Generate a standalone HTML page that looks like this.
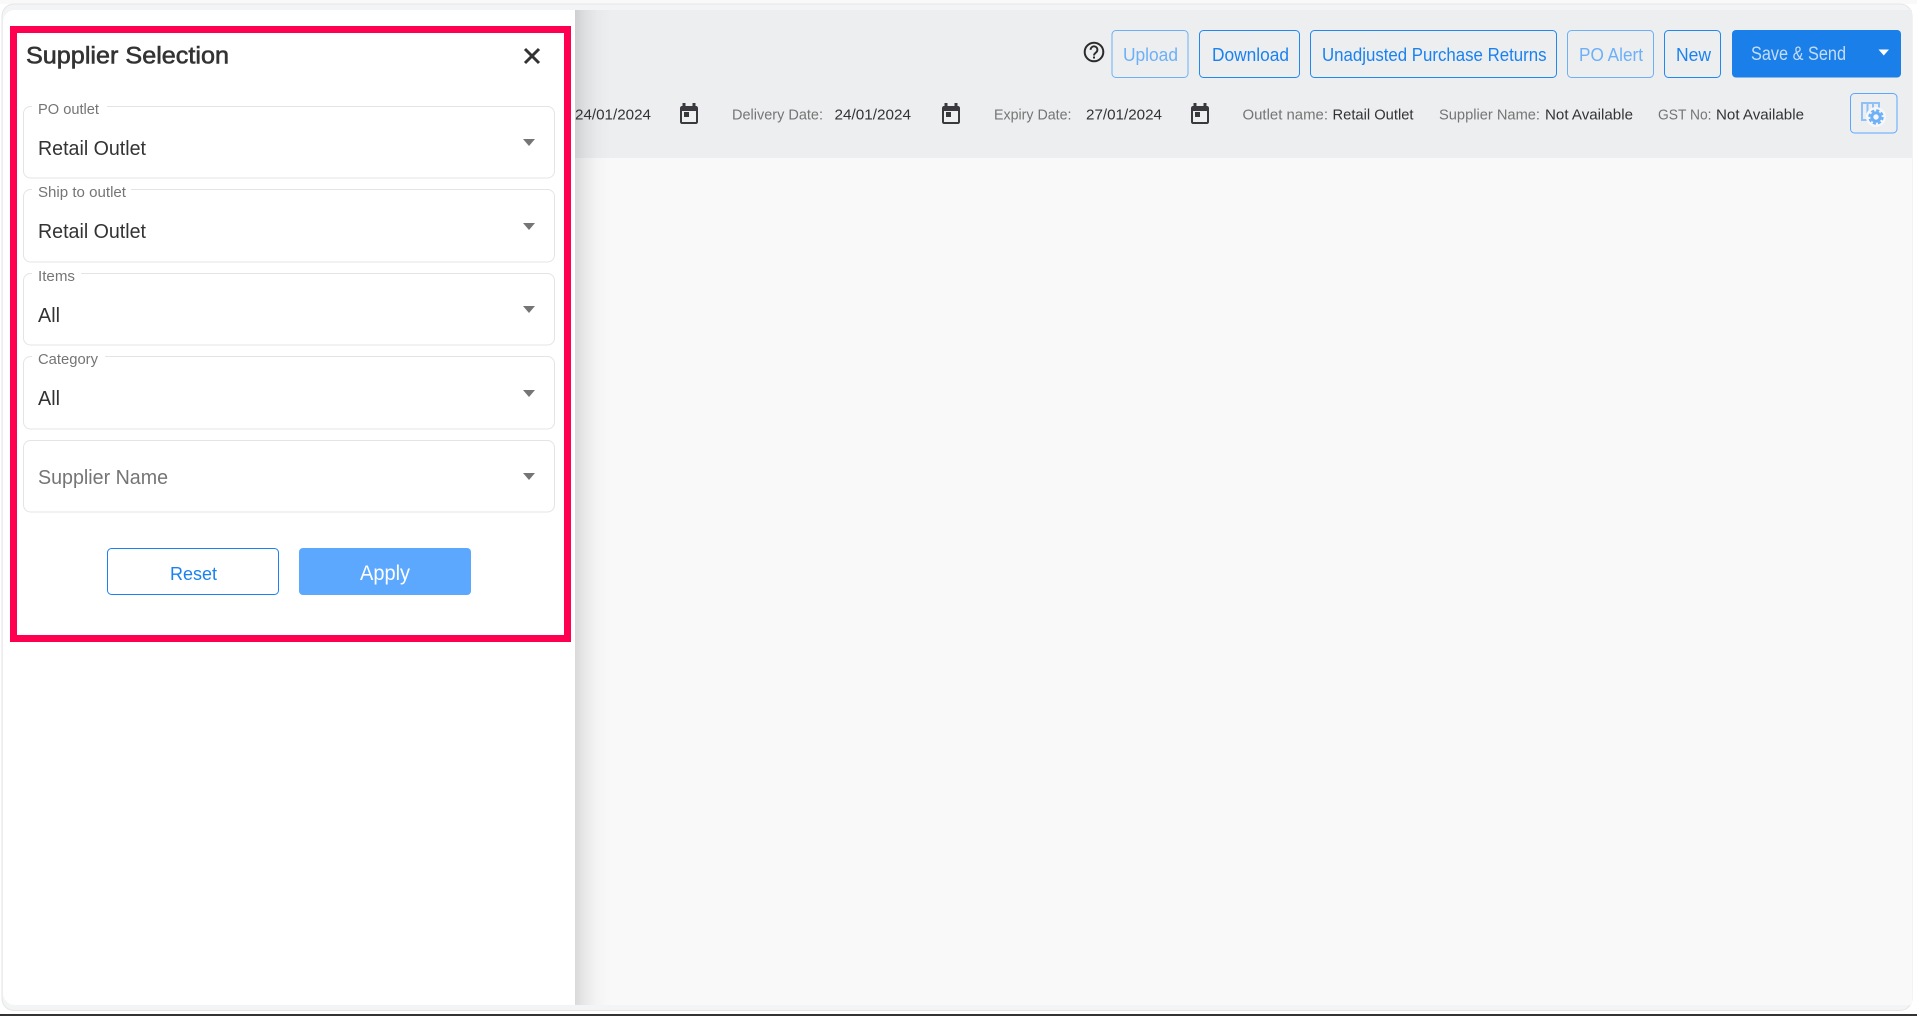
<!DOCTYPE html>
<html lang="en"><head><meta charset="utf-8"><title>Supplier Selection</title>
<style>
html,body{margin:0;padding:0;background:#fff;width:1917px;height:1016px;overflow:hidden}
svg{display:block}
text{font-family:"Liberation Sans",Arial,sans-serif;white-space:pre}
.lb{font-size:14.5px;fill:#757575}
.v{font-size:20.5px;fill:#333}
.t{font-size:15px;fill:#333}
.g{font-size:15px;fill:#757575}
.b{font-size:18.5px;fill:#1a82f0}
.d{font-size:18.5px;fill:#6db0f8}
.f{fill:#fff;stroke:#e4e4e4;stroke-width:1}
</style></head>
<body>
<svg width="1917" height="1016" viewBox="0 0 1917 1016" xmlns="http://www.w3.org/2000/svg">
<defs>
<linearGradient id="sh" x1="0" x2="1" y1="0" y2="0">
<stop offset="0" stop-color="#000" stop-opacity=".13"/>
<stop offset=".25" stop-color="#000" stop-opacity=".07"/>
<stop offset=".6" stop-color="#000" stop-opacity=".02"/>
<stop offset="1" stop-color="#000" stop-opacity="0"/>
</linearGradient>
<g id="cal">
<path d="M2.5 0h3v3h7V0h3v3h.5c1.1 0 2 .9 2 2v14c0 1.100-.9 2-2 2H2c-1.100 0-2-.9-2-2V5c0-1.100.9-2 2-2h.5z" fill="#3a3a3e"/>
<rect x="2" y="8" width="14" height="11" fill="#eef0f2"/>
<rect x="4" y="9" width="5" height="5" fill="#3a3a3e"/>
</g>
<path id="car" d="M0 0h12l-6 7z" fill="#757575"/>
</defs>

<rect width="1917" height="1016" fill="#fff"/>
<rect width="1917" height="4" fill="#f9f9f9"/>
<rect x="2" y="4" width="1910" height="1006.500" rx="12" fill="#f3f4f6" stroke="#e6e6e6"/>
<rect x="575" y="10" width="1337" height="148" fill="#eceef0"/>
<rect x="575" y="158" width="1337" height="847" fill="#f9f9fa"/>
<path d="M3 22a12 12 0 0 1 12-12h560v995H15a12 12 0 0 1-12-12z" fill="#fff"/>
<rect x="575" y="10" width="36" height="995" fill="url(#sh)"/>
<rect x="0" y="1014" width="1917" height="2" fill="#333"/>

<!-- highlight -->
<rect x="13.500" y="29.500" width="554" height="609" fill="none" stroke="#ff0050" stroke-width="7"/>

<!-- panel -->
<text x="26" y="63.500" font-size="24.500" fill="#333" stroke="#333" stroke-width=".6" textLength="203" lengthAdjust="spacingAndGlyphs">Supplier Selection</text>
<path d="M525 49l14 14M539 49l-14 14" stroke="#333" stroke-width="3" fill="none"/>

<rect class="f" x="23.500" y="106.500" width="531" height="71.500" rx="7"/>
<rect x="32" y="104" width="75" height="6" fill="#fff"/>
<text class="lb" x="38" y="114" textLength="61" lengthAdjust="spacingAndGlyphs">PO outlet</text>
<text class="v" x="38" y="155" textLength="108" lengthAdjust="spacingAndGlyphs">Retail Outlet</text>
<use href="#car" x="523" y="139"/>

<rect class="f" x="23.500" y="189.500" width="531" height="72.500" rx="7"/>
<rect x="32" y="187" width="99" height="6" fill="#fff"/>
<text class="lb" x="38" y="197" textLength="88" lengthAdjust="spacingAndGlyphs">Ship to outlet</text>
<text class="v" x="38" y="238" textLength="108" lengthAdjust="spacingAndGlyphs">Retail Outlet</text>
<use href="#car" x="523" y="223"/>

<rect class="f" x="23.500" y="273.500" width="531" height="71.500" rx="7"/>
<rect x="32" y="271" width="49" height="6" fill="#fff"/>
<text class="lb" x="38" y="281" textLength="37" lengthAdjust="spacingAndGlyphs">Items</text>
<text class="v" x="38" y="322" textLength="22" lengthAdjust="spacingAndGlyphs">All</text>
<use href="#car" x="523" y="306"/>

<rect class="f" x="23.500" y="356.500" width="531" height="72.500" rx="7"/>
<rect x="32" y="354" width="73" height="6" fill="#fff"/>
<text class="lb" x="38" y="364" textLength="60" lengthAdjust="spacingAndGlyphs">Category</text>
<text class="v" x="38" y="405" textLength="22" lengthAdjust="spacingAndGlyphs">All</text>
<use href="#car" x="523" y="390"/>

<rect class="f" x="23.500" y="440.500" width="531" height="71.500" rx="7"/>
<text class="v" x="38" y="484" style="fill:#757575" textLength="130" lengthAdjust="spacingAndGlyphs">Supplier Name</text>
<use href="#car" x="523" y="473"/>

<rect x="107.500" y="548.500" width="171" height="46" rx="4" fill="#fff" stroke="#1a82f0" stroke-width="1"/>
<text x="170" y="580" font-size="18.500" fill="#1a82f0" textLength="47" lengthAdjust="spacingAndGlyphs">Reset</text>
<rect x="299" y="548" width="172" height="47" rx="4" fill="#5ca8ff"/>
<text x="360" y="580" font-size="21" fill="#fff" textLength="50" lengthAdjust="spacingAndGlyphs">Apply</text>

<!-- toolbar buttons -->
<circle cx="1094" cy="52" r="9.300" fill="none" stroke="#2b2b2b" stroke-width="2"/>
<path d="M1090.600 49.800a3.400 3.400 0 1 1 5.400 2.700c-1.200.9-2 1.500-2 3" fill="none" stroke="#2b2b2b" stroke-width="1.900"/>
<rect x="1093" y="56.500" width="2" height="2" fill="#2b2b2b"/>

<rect x="1112" y="30.500" width="76" height="47" rx="4" fill="none" stroke="#6db0f8" stroke-width="1"/>
<text class="d" x="1123" y="61" textLength="55" lengthAdjust="spacingAndGlyphs">Upload</text>
<rect x="1199.500" y="30.500" width="100" height="47" rx="4" fill="none" stroke="#2188f2" stroke-width="1"/>
<text class="b" x="1212" y="61" textLength="77" lengthAdjust="spacingAndGlyphs">Download</text>
<rect x="1310.500" y="30.500" width="246" height="47" rx="4" fill="none" stroke="#2188f2" stroke-width="1"/>
<text class="b" x="1322" y="61" textLength="224.500" lengthAdjust="spacingAndGlyphs">Unadjusted Purchase Returns</text>
<rect x="1567.500" y="30.500" width="86" height="47" rx="4" fill="none" stroke="#6db0f8" stroke-width="1"/>
<text class="d" x="1579" y="61" textLength="64" lengthAdjust="spacingAndGlyphs">PO Alert</text>
<rect x="1664.500" y="30.500" width="56" height="47" rx="4" fill="none" stroke="#2188f2" stroke-width="1"/>
<text class="b" x="1676" y="61" textLength="35" lengthAdjust="spacingAndGlyphs">New</text>
<rect x="1732" y="30" width="169" height="47.500" rx="4" fill="#1a7fe8"/>
<text x="1751" y="60" font-size="19" fill="#c4dcf7" textLength="95" lengthAdjust="spacingAndGlyphs">Save &amp; Send</text>
<path d="M1878.500 49.500h10.500l-5.250 6z" fill="#fff"/>

<!-- second row -->
<text class="t" x="575" y="119.500" textLength="76" lengthAdjust="spacingAndGlyphs">24/01/2024</text>
<use href="#cal" x="680" y="103"/>
<text class="g" x="732" y="119.500" textLength="91" lengthAdjust="spacingAndGlyphs">Delivery Date:</text>
<text class="t" x="834.500" y="119.500" textLength="76.500" lengthAdjust="spacingAndGlyphs">24/01/2024</text>
<use href="#cal" x="942" y="103"/>
<text class="g" x="994" y="119.500" textLength="77.500" lengthAdjust="spacingAndGlyphs">Expiry Date:</text>
<text class="t" x="1086" y="119.500" textLength="76" lengthAdjust="spacingAndGlyphs">27/01/2024</text>
<use href="#cal" x="1191" y="103"/>
<text class="g" x="1242.500" y="119.500" textLength="85.500" lengthAdjust="spacingAndGlyphs">Outlet name:</text>
<text class="t" x="1332.500" y="119.500" textLength="81" lengthAdjust="spacingAndGlyphs">Retail Outlet</text>
<text class="g" x="1439" y="119.500" textLength="101" lengthAdjust="spacingAndGlyphs">Supplier Name:</text>
<text class="t" x="1545" y="119.500" textLength="88" lengthAdjust="spacingAndGlyphs">Not Available</text>
<text class="g" x="1658" y="119.500" textLength="53.500" lengthAdjust="spacingAndGlyphs">GST No:</text>
<text class="t" x="1716" y="119.500" textLength="88" lengthAdjust="spacingAndGlyphs">Not Available</text>

<!-- settings -->
<rect x="1850.500" y="93.500" width="46.500" height="39.500" rx="4" fill="none" stroke="#5ca8ff" stroke-width="1"/>
<path d="M1862 120V103h17v17zM1867.500 103v17M1873 103v17" fill="none" stroke="#8fc1f8" stroke-width="2"/>
<circle cx="1876" cy="117" r="10" fill="#f6f7f8"/>
<circle cx="1876" cy="117" r="4.200" fill="none" stroke="#6db0f8" stroke-width="3"/>
<circle cx="1876" cy="117" r="6.700" fill="none" stroke="#6db0f8" stroke-width="2" stroke-dasharray="3.200 2.060"/>
</svg>
</body></html>
